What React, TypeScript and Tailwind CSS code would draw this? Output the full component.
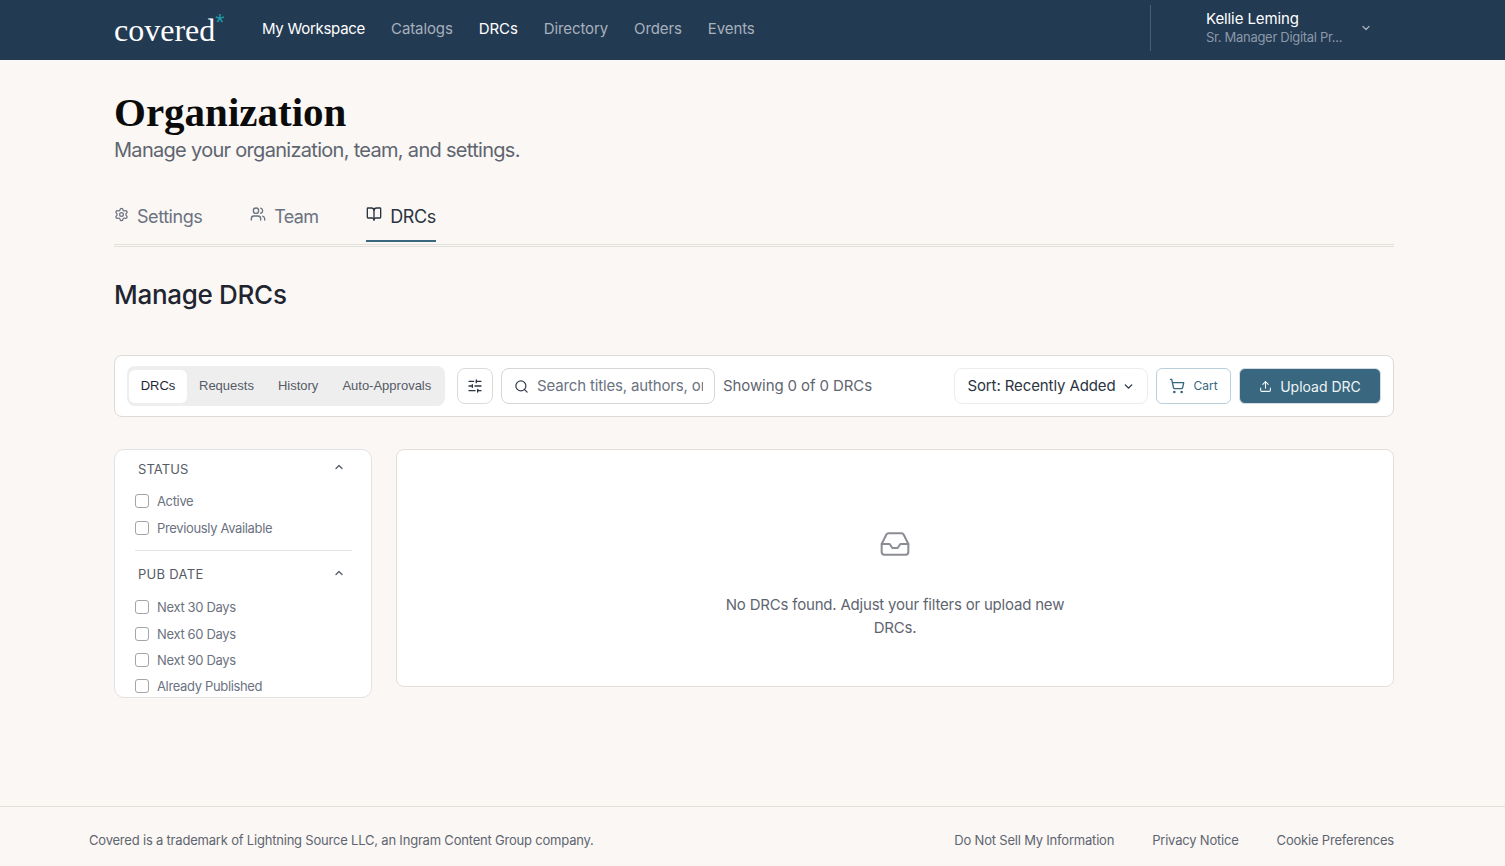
import { BookOpen, ChevronDown, ChevronUp, Inbox, Search, Settings, ShoppingCart, SlidersHorizontal, Upload, Users } from "lucide-react";

const navItems = [
  { label: "My Workspace", active: true },
  { label: "Catalogs", active: false },
  { label: "DRCs", active: true },
  { label: "Directory", active: false },
  { label: "Orders", active: false },
  { label: "Events", active: false },
];

function Check({ label, className }: { label: string; className: string }) {
  return (
    <label className={`flex items-center gap-[8px] h-[20px] text-[13px] tracking-[-0.35px] text-[#6b7280] ${className}`}>
      <span className="w-[14px] h-[14px] rounded-[3px] border border-[#a3a5aa] bg-white" />
      <span className="pt-[2px]">{label}</span>
    </label>
  );
}

export default function App() {
  return (
    <div className="min-h-[866px] flex flex-col bg-[#faf7f4] font-['Inter',sans-serif] text-[#1f2937]">
      <header className="h-[60px] bg-[#233a53] flex items-center pb-[4px] pl-[114px] pr-[133px]">
        <div className="w-[148px] flex items-start">
          <span className="font-['Liberation_Serif',serif] text-[32px] leading-[32px] mt-[3px] text-white">covered</span>
          <span className="font-['Liberation_Sans',sans-serif] text-[24px] leading-[24px] text-[#1e9aa8]">*</span>
        </div>
        <nav className="flex gap-[26px] pt-[2px] text-[15px] tracking-[-0.1px]">
          {navItems.map((item) => (
            <a
              key={item.label}
              className={`${item.active ? "text-white" : "text-[#a7b1bc]"} ${item.label === "My Workspace" ? "tracking-[-0.28px]" : ""}`}
            >
              {item.label}
            </a>
          ))}
        </nav>
        <div className="ml-auto h-[46px] pl-[55px] border-l border-[#4b5e73] flex items-center">
          <div className="w-[154px]">
            <div className="text-[15px] leading-[18px] tracking-[-0.1px] text-white">Kellie Leming</div>
            <div className="text-[13px] leading-[18px] tracking-[-0.3px] text-[#8b99a8]">Sr. Manager Digital Pr...</div>
          </div>
          <ChevronDown size={12} strokeWidth={2.5} className="text-[#a7b1bc]" />
        </div>
      </header>

      <main className="flex-1 pl-[114px] pr-[111px]">
        <h1 className="mt-[29px] font-['Liberation_Serif',serif] font-bold text-[41px] leading-[46px] text-[#0b0b0b]">Organization</h1>
        <p className="text-[20px] leading-[30px] tracking-[-0.7px] text-[#5f6570]">Manage your organization, team, and settings.</p>

        <div className="mt-[24px] h-[58px] flex border-b-[3px] border-double border-[#e2ded8] text-[18px] tracking-[-0.45px]">
          <div className="flex items-start pt-[14px] gap-[8px] text-[#6b7280]">
            <Settings size={15} className="mt-[4px]" />
            <span className="leading-[27px]">Settings</span>
          </div>
          <div className="ml-[48px] flex items-start pt-[14px] gap-[8px] text-[#6b7280]">
            <Users size={16} className="mt-[3px]" />
            <span className="leading-[27px] tracking-[-0.7px]">Team</span>
          </div>
          <div className="ml-[48px] relative flex items-start pt-[14px] gap-[8px] text-[#2b3441]">
            <BookOpen size={16} className="mt-[3px]" />
            <span className="leading-[27px]">DRCs</span>
            <span className="absolute left-0 right-0 top-[51px] h-[2px] bg-[#38677f]" />
          </div>
        </div>

        <h2 className="mt-[30px] text-[26px] leading-[36px] font-medium tracking-[-0.3px] text-[#1f2530]">Manage DRCs</h2>

        <div className="mt-[42px] h-[62px] rounded-[8px] border border-[#dddbd8] bg-white flex items-center pl-[12px] pr-[12px]">
          <div className="w-[318px] h-[40px] rounded-[8px] bg-[#eeeeee] flex items-center px-[2px] font-['Liberation_Sans',sans-serif] text-[13px] text-[#555b66]">
            <span className="w-[58px] h-[33px] rounded-[6px] bg-white text-[#1f2937] flex items-center justify-center">DRCs</span>
            <span className="ml-[12px]">Requests</span>
            <span className="ml-[24px]">History</span>
            <span className="ml-[24px]">Auto-Approvals</span>
          </div>
          <button className="ml-[12px] w-[36px] h-[36px] rounded-[8px] border border-[#dddbd8] flex items-center justify-center text-[#2b3441]">
            <SlidersHorizontal size={16} />
          </button>
          <div className="ml-[8px] w-[214px] h-[36px] rounded-[8px] border border-[#d6d6d6] flex items-center pl-[12px] gap-[8px] overflow-hidden text-[#6b7280]">
            <Search size={15} className="shrink-0 text-[#374151]" />
            <span className="w-[166px] overflow-hidden whitespace-nowrap text-[15px] tracking-[-0.15px]">Search titles, authors, or</span>
          </div>
          <span className="ml-[8px] text-[15px] tracking-[-0.1px] text-[#5f6570]">Showing 0 of 0 DRCs</span>
          <button className="ml-auto w-[194px] h-[36px] rounded-[8px] border border-[#ececec] flex items-center justify-center gap-[6px] text-[15px] tracking-[-0.1px] text-[#2b3441]">
            Sort: Recently Added
            <ChevronDown size={13} strokeWidth={2.5} />
          </button>
          <button className="ml-[8px] w-[75px] h-[36px] rounded-[6px] border border-[#b9cfdb] flex items-center justify-center gap-[8px] text-[12px] text-[#38677f]">
            <ShoppingCart size={16} />
            Cart
          </button>
          <button className="ml-[8px] w-[142px] h-[36px] rounded-[6px] border border-[#d3dce2] bg-[#38677f] flex items-center justify-center gap-[8px] text-[14px] text-[#f0f4f6]">
            <Upload size={13} />
            Upload DRC
          </button>
        </div>

        <div className="mt-[32px] flex items-start gap-[24px]">
          <aside className="w-[258px] h-[249px] shrink-0 overflow-hidden rounded-[10px] border border-[#e2e2e2] bg-white pl-[20px] pr-[19px]">
            <div className="h-[39px] flex items-center justify-between pl-[3px] pr-[7px] text-[13px] tracking-[0.1px] text-[#555b66]">
              STATUS
              <ChevronUp size={12} strokeWidth={2.5} className="mb-[5px]" />
            </div>
            <Check label="Active" className="mt-[2px]" />
            <Check label="Previously Available" className="mt-[7px]" />
            <div className="mt-[12px] border-t border-[#e5e5e8]" />
            <div className="h-[46px] pt-[2px] flex items-center justify-between pl-[3px] pr-[7px] text-[13px] tracking-[0.3px] text-[#555b66]">
              PUB DATE
              <ChevronUp size={12} strokeWidth={2.5} className="mb-[5px]" />
            </div>
            <Check label="Next 30 Days" className="mt-[0px]" />
            <Check label="Next 60 Days" className="mt-[7px]" />
            <Check label="Next 90 Days" className="mt-[6px]" />
            <Check label="Already Published" className="mt-[6px]" />
          </aside>
          <section className="flex-1 h-[238px] rounded-[8px] border border-[#e2dfda] bg-white flex flex-col items-center pt-[78px]">
            <Inbox size={32} strokeWidth={1.5} className="text-[#8a8d93]" />
            <p className="mt-[33px] w-[360px] text-center text-[15px] leading-[23px] tracking-[-0.2px] text-[#5f6570]">
              No DRCs found. Adjust your filters or upload new DRCs.
            </p>
          </section>
        </div>
      </main>

      <footer className="h-[60px] border-t border-[#e2ded8] flex items-center justify-between pt-[8px] pl-[89px] pr-[111px] text-[13px] tracking-[-0.2px] text-[#5f6570]">
        <span>Covered is a trademark of Lightning Source LLC, an Ingram Content Group company.</span>
        <div className="flex gap-[38px]">
          <a>Do Not Sell My Information</a>
          <a>Privacy Notice</a>
          <a>Cookie Preferences</a>
        </div>
      </footer>
    </div>
  );
}
